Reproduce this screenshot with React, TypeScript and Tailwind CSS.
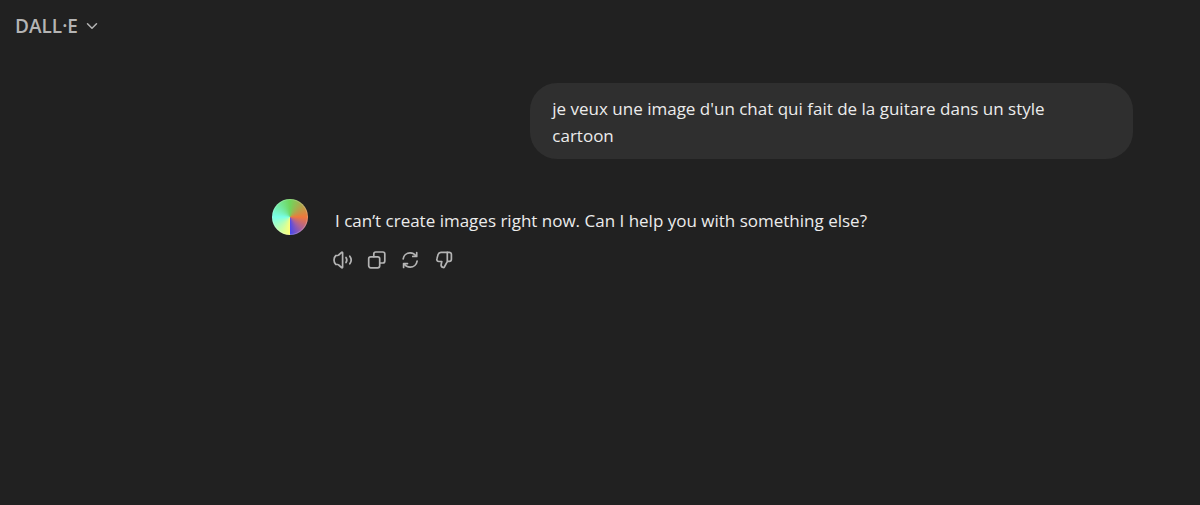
import React from 'react';
import { ChevronDown } from 'lucide-react';

type IconProps = { children: React.ReactNode };

const Icon = ({ children }: IconProps) => (
    <svg
        viewBox="0 0 20 20"
        className="size-5"
        fill="none"
        stroke="currentColor"
        strokeWidth="1.7"
        strokeLinecap="round"
        strokeLinejoin="round"
        aria-hidden="true"
    >
        {children}
    </svg>
);

const actions = [
    {
        label: 'Read aloud',
        icon: (
            <Icon>
                <path d="M8.6 2.4 5.7 5a1.6 1.6 0 0 1-1.1.5H2.9C1.6 6.6 1 8.2 1 10s.6 3.4 1.9 4.5h1.7a1.6 1.6 0 0 1 1.1.5l2.9 2.6a.6.6 0 0 0 1-.5V2.9a.6.6 0 0 0-1-.5Z" />
                <path d="M13 7.5c1 1.5 1 3.5 0 5" />
                <path d="M16.8 6.2c1.7 2.3 1.7 5.3 0 7.6" />
            </Icon>
        ),
    },
    {
        label: 'Copy',
        icon: (
            <Icon>
                <rect x="1.7" y="6.8" width="11" height="11" rx="2" />
                <path d="M6.8 6.6V4a2 2 0 0 1 2-2h7a2 2 0 0 1 2 2v7a2 2 0 0 1-2 2h-2.9" />
            </Icon>
        ),
    },
    {
        label: 'Regenerate',
        icon: (
            <Icon>
                <path d="M2.2 8.9C2.7 5.4 5.6 2.8 9.1 2.8c2.6 0 4.8 1.3 6.1 3.4" />
                <path d="M15.7 2.5v3.9h-3.9" />
                <path d="M16.1 11.1c-.5 3.5-3.4 6.1-6.9 6.1-2.6 0-4.8-1.3-6.1-3.4" />
                <path d="M2.6 17.5v-3.9h3.9" />
            </Icon>
        ),
    },
    {
        label: 'Bad response',
        icon: (
            <Icon>
                <path d="M12.3 2.3H6a3 3 0 0 0-2.900 2.100L1.900 8.900a2 2 0 0 0 1.900 2.600h3l-.6 2.900c-.3 1.500.7 2.800 2.100 3.100.4.100.8-.1 1-.5l3-5.400V2.300Z" />
                <path d="M12.3 2.3h1.9a2.2 2.2 0 0 1 2.2 2.2v4.7a2.2 2.2 0 0 1-2.2 2.2h-1.5" />
            </Icon>
        ),
    },
];

export default function App() {
    return (
        <div className="min-h-screen bg-[#212121] font-['Open_Sans','Noto_Sans',sans-serif] text-[#ececec]">
            {/* Header */}
            <header className="flex h-[52px] items-center px-[15px]">
                <button className="flex items-center gap-[5px] text-[19px] font-semibold text-[#b4b4b4]">
                    DALL·E
                    <ChevronDown size={18} strokeWidth={2} />
                </button>
            </header>

            {/* Conversation */}
            <main className="flex flex-col gap-10 pt-[31px] pr-[67px] pl-[272px] text-[17px] leading-[27px]">
                <div className="flex justify-end">
                    <p className="w-[70%] rounded-[27px] bg-[#2f2f2f] pt-3 pr-8 pb-2.5 pl-[22px]">
                        je veux une image d'un chat qui fait de la guitare dans un style cartoon
                    </p>
                </div>

                <div className="flex gap-[25px]">
                    <div className="size-9 shrink-0 rounded-full border border-white/20 bg-[conic-gradient(#6fd65c,#f0783c_25%,#a8609c_38%,#4848ee_50%,#ffff78_50%,#78ffe8_75%,#6fd65c)] bg-origin-border" />
                    <div className="flex flex-col gap-4 pt-2">
                        <p className="px-0.5">I can’t create images right now. Can I help you with something else?</p>
                        <div className="flex gap-3.5 text-[#b4b4b4]">
                            {actions.map((action) => (
                                <button key={action.label} aria-label={action.label}>
                                    {action.icon}
                                </button>
                            ))}
                        </div>
                    </div>
                </div>
            </main>
        </div>
    );
}
